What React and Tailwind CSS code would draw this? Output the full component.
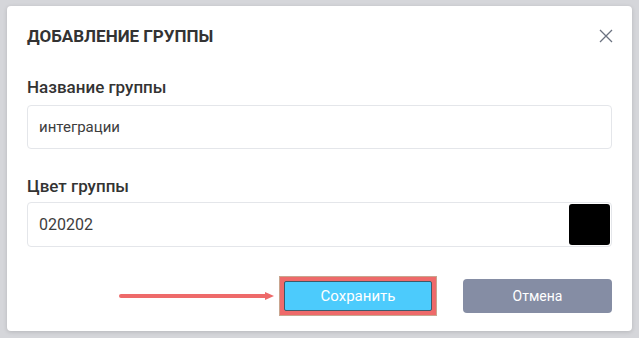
import React from "react";

export default function App() {
  return (
    <div className="w-[639px] h-[338px] bg-[#d5d6da] pt-[6px] pl-[7px] overflow-hidden font-['Roboto',sans-serif]">
      <div className="w-[625px] h-[325px] bg-white rounded-[4px] shadow-[0_1px_4px_rgba(0,0,0,0.15)] pt-[18px] px-[20px]">
        <div className="flex items-center justify-between h-[24px]">
          <h2 className="text-[17px] leading-[24px] font-bold text-[#333] uppercase">Добавление группы</h2>
          <svg width="16" height="16" viewBox="0 0 16 16" className="mr-[-2px]">
            <path d="M2 2L14 14M14 2L2 14" stroke="#6b7280" strokeWidth="1.3" fill="none" />
          </svg>
        </div>

        <div className="mt-[27px]">
          <label className="block text-[17px] leading-[24px] font-medium text-[#333]">Название группы</label>
          <div className="mt-[6px] h-[44px] border border-[#e4e6ea] rounded-[4px] flex items-center px-[11px] text-[15px] text-[#3d3d3d]">
            интеграции
          </div>
        </div>

        <div className="mt-[25px]">
          <label className="block text-[17px] leading-[24px] font-medium text-[#333]">Цвет группы</label>
          <div className="mt-[4px] h-[45px] border border-[#e4e6ea] rounded-[4px] flex items-center justify-between pl-[11px] pr-[1px] text-[16px] text-[#3d3d3d]">
            <span>020202</span>
            <div className="w-[41px] h-[41px] bg-black rounded-[3px]" />
          </div>
        </div>

        <div className="mt-[29px] flex items-center justify-end">
          <svg width="158" height="10" viewBox="0 0 158 10" className="mr-[2px]">
            <line x1="2" y1="5" x2="148" y2="5" stroke="#ee6a6a" strokeWidth="4" strokeLinecap="round" />
            <path d="M146 1L155 5L146 9Z" fill="#ee6a6a" />
          </svg>
          <div className="p-[4px] bg-[#ee6a6a] border border-[#c9a58f]">
            <button className="w-[148px] h-[30px] bg-[#4ccbfc] border border-[#3d5a6a] rounded-[2px] text-white text-[15px]">
              Сохранить
            </button>
          </div>
          <button className="ml-[26px] w-[149px] h-[34px] bg-[#858da4] rounded-[4px] text-white text-[14px]">
            Отмена
          </button>
        </div>
      </div>
    </div>
  );
}
